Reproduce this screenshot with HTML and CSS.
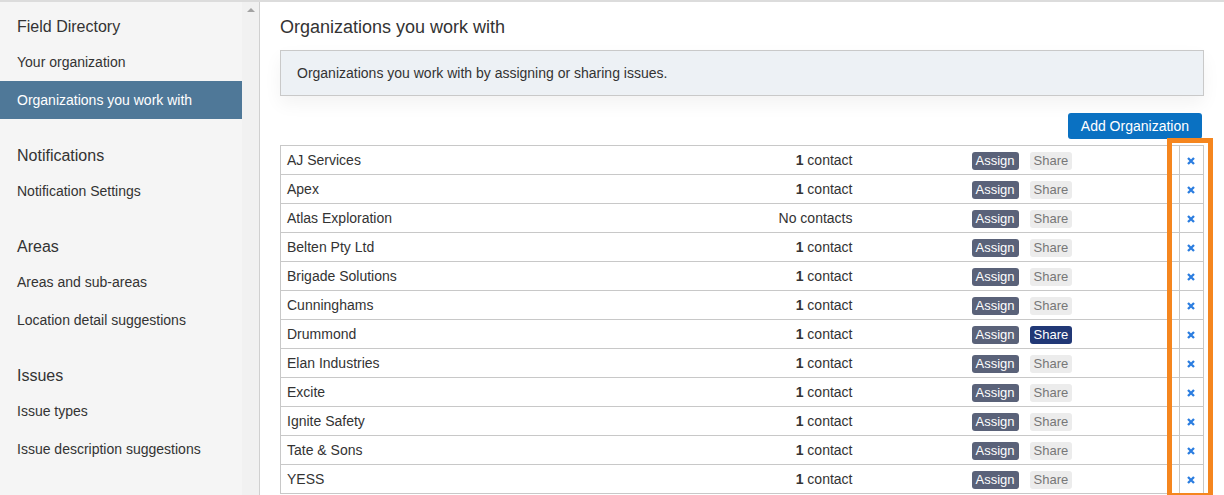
FILE: index.html
```html
<!DOCTYPE html>
<html lang="en">
<head>
<meta charset="utf-8">
<title>Organizations you work with</title>
<link rel="stylesheet" href="styles.css">
</head>
<body>
<div class="app">
  <aside class="sidebar">
    <section class="nav-section">
      <h3 class="nav-heading">Field Directory</h3>
      <a class="nav-link" href="#">Your organization</a>
      <a class="nav-link active" href="#">Organizations you work with</a>
    </section>
    <section class="nav-section">
      <h3 class="nav-heading">Notifications</h3>
      <a class="nav-link" href="#">Notification Settings</a>
    </section>
    <section class="nav-section">
      <h3 class="nav-heading">Areas</h3>
      <a class="nav-link" href="#">Areas and sub-areas</a>
      <a class="nav-link" href="#">Location detail suggestions</a>
    </section>
    <section class="nav-section">
      <h3 class="nav-heading">Issues</h3>
      <a class="nav-link" href="#">Issue types</a>
      <a class="nav-link" href="#">Issue description suggestions</a>
    </section>
  </aside>
  <div class="scrollbar"><span class="scroll-arrow"></span></div>
  <main class="main">
    <h1 class="page-title">Organizations you work with</h1>
    <div class="info-box">Organizations you work with by assigning or sharing issues.</div>
    <div class="toolbar"><button class="btn-primary" type="button">Add Organization</button></div>
    <div class="table-wrap">
      <table class="org-table">
        <colgroup>
          <col class="c-name"><col class="c-contacts"><col class="c-actions"><col class="c-remove">
        </colgroup>
        <tbody>
          <tr><td>AJ Services</td><td class="contacts"><b>1</b> contact</td><td class="actions"><span class="badge assign">Assign</span><span class="badge share">Share</span></td><td class="remove"><svg viewBox="0 0 8 8" width="8" height="8"><path d="M1 1L7 7M7 1L1 7"/></svg></td></tr>
          <tr><td>Apex</td><td class="contacts"><b>1</b> contact</td><td class="actions"><span class="badge assign">Assign</span><span class="badge share">Share</span></td><td class="remove"><svg viewBox="0 0 8 8" width="8" height="8"><path d="M1 1L7 7M7 1L1 7"/></svg></td></tr>
          <tr><td>Atlas Exploration</td><td class="contacts">No contacts</td><td class="actions"><span class="badge assign">Assign</span><span class="badge share">Share</span></td><td class="remove"><svg viewBox="0 0 8 8" width="8" height="8"><path d="M1 1L7 7M7 1L1 7"/></svg></td></tr>
          <tr><td>Belten Pty Ltd</td><td class="contacts"><b>1</b> contact</td><td class="actions"><span class="badge assign">Assign</span><span class="badge share">Share</span></td><td class="remove"><svg viewBox="0 0 8 8" width="8" height="8"><path d="M1 1L7 7M7 1L1 7"/></svg></td></tr>
          <tr><td>Brigade Solutions</td><td class="contacts"><b>1</b> contact</td><td class="actions"><span class="badge assign">Assign</span><span class="badge share">Share</span></td><td class="remove"><svg viewBox="0 0 8 8" width="8" height="8"><path d="M1 1L7 7M7 1L1 7"/></svg></td></tr>
          <tr><td>Cunninghams</td><td class="contacts"><b>1</b> contact</td><td class="actions"><span class="badge assign">Assign</span><span class="badge share">Share</span></td><td class="remove"><svg viewBox="0 0 8 8" width="8" height="8"><path d="M1 1L7 7M7 1L1 7"/></svg></td></tr>
          <tr><td>Drummond</td><td class="contacts"><b>1</b> contact</td><td class="actions"><span class="badge assign">Assign</span><span class="badge share on">Share</span></td><td class="remove"><svg viewBox="0 0 8 8" width="8" height="8"><path d="M1 1L7 7M7 1L1 7"/></svg></td></tr>
          <tr><td>Elan Industries</td><td class="contacts"><b>1</b> contact</td><td class="actions"><span class="badge assign">Assign</span><span class="badge share">Share</span></td><td class="remove"><svg viewBox="0 0 8 8" width="8" height="8"><path d="M1 1L7 7M7 1L1 7"/></svg></td></tr>
          <tr><td>Excite</td><td class="contacts"><b>1</b> contact</td><td class="actions"><span class="badge assign">Assign</span><span class="badge share">Share</span></td><td class="remove"><svg viewBox="0 0 8 8" width="8" height="8"><path d="M1 1L7 7M7 1L1 7"/></svg></td></tr>
          <tr><td>Ignite Safety</td><td class="contacts"><b>1</b> contact</td><td class="actions"><span class="badge assign">Assign</span><span class="badge share">Share</span></td><td class="remove"><svg viewBox="0 0 8 8" width="8" height="8"><path d="M1 1L7 7M7 1L1 7"/></svg></td></tr>
          <tr><td>Tate &amp; Sons</td><td class="contacts"><b>1</b> contact</td><td class="actions"><span class="badge assign">Assign</span><span class="badge share">Share</span></td><td class="remove"><svg viewBox="0 0 8 8" width="8" height="8"><path d="M1 1L7 7M7 1L1 7"/></svg></td></tr>
          <tr><td>YESS</td><td class="contacts"><b>1</b> contact</td><td class="actions"><span class="badge assign">Assign</span><span class="badge share">Share</span></td><td class="remove"><svg viewBox="0 0 8 8" width="8" height="8"><path d="M1 1L7 7M7 1L1 7"/></svg></td></tr>
        </tbody>
      </table>
      <div class="highlight"></div>
    </div>
  </main>
</div>
</body>
</html>
```
FILE: styles.css
```css
* { box-sizing: border-box; }
html, body { margin: 0; padding: 0; }
body {
  font-family: "Liberation Sans", Arial, sans-serif;
  color: #333;
  background: #fff;
  height: 495px;
  overflow: hidden;
}
.app {
  display: flex;
  height: 495px;
  border-top: 2px solid #dcdcdc;
}
.sidebar {
  width: 242px;
  flex: none;
  background: #f5f5f5;
  padding-top: 14px;
}
.nav-section + .nav-section { margin-top: 26px; }
.nav-heading {
  margin: 0 0 5px;
  padding-left: 17px;
  font-size: 16px;
  font-weight: normal;
  line-height: 22px;
  color: #333;
}
.nav-link {
  display: block;
  height: 38px;
  line-height: 38px;
  padding-left: 17px;
  font-size: 14px;
  color: #333;
  text-decoration: none;
}
.nav-link.active {
  background: #4f7898;
  color: #fff;
}
.scrollbar {
  width: 18px;
  flex: none;
  background: #f1f1f1;
  border-right: 1px solid #d0d0d0;
  display: flex;
  justify-content: center;
  padding-top: 6px;
}
.scroll-arrow {
  width: 0;
  height: 0;
  border-left: 4px solid transparent;
  border-right: 4px solid transparent;
  border-bottom: 4px solid #a3a3a3;
}
.main {
  flex: 1;
  padding: 0 20px;
}
.page-title {
  margin: 14px 0 12px;
  font-size: 18px;
  font-weight: normal;
  line-height: 22px;
  color: #333;
}
.info-box {
  height: 46px;
  line-height: 44px;
  padding: 0 16px;
  background: #edf1f5;
  border: 1px solid #c9c9c9;
  font-size: 14px;
  box-shadow: 0 8px 18px rgba(0, 0, 0, 0.05);
}
.toolbar {
  display: flex;
  justify-content: flex-end;
  margin-top: 17px;
  padding-right: 2px;
}
.btn-primary {
  height: 26px;
  padding: 0 13px;
  border: 0;
  border-radius: 3px;
  background: #0a71c2;
  color: #fff;
  font-family: "Liberation Sans", Arial, sans-serif;
  font-size: 14px;
  line-height: 26px;
}
.table-wrap {
  position: relative;
  margin-top: 6px;
}
.org-table {
  width: 100%;
  border-collapse: collapse;
  table-layout: fixed;
  font-size: 14px;
}
.c-name { width: 492px; }
.c-contacts { width: 86px; }
.c-remove { width: 24px; }
.org-table tr { height: 29px; }
.org-table td {
  border-top: 1px solid #c8c8c8;
  border-bottom: 1px solid #c8c8c8;
  padding: 0 6px;
  white-space: nowrap;
  vertical-align: middle;
}
.org-table td:first-child { border-left: 1px solid #c8c8c8; }
.org-table td.contacts { text-align: right; }
.org-table td.actions { padding-left: 113px; }
.org-table td.remove {
  border-left: 1px solid #c8c8c8;
  border-right: 1px solid #c8c8c8;
  padding: 0 1px 0 0;
  text-align: center;
}
.remove svg {
  display: inline-block;
  vertical-align: middle;
  fill: none;
  stroke: #2b7de0;
  stroke-width: 2.3;
}
.badge {
  display: inline-block;
  height: 18px;
  line-height: 18px;
  padding: 0 4px;
  border-radius: 3px;
  font-size: 13px;
  vertical-align: middle;
  margin-top: 2px;
}
.badge + .badge { margin-left: 11px; }
.badge.assign { background: #5a6279; color: #fff; }
.badge.share { background: #ececec; color: #777; }
.badge.share.on { background: #213876; color: #fff; }
.highlight {
  position: absolute;
  left: 887px;
  top: -7px;
  width: 46px;
  height: 360px;
  border: 5px solid #f5861f;
  pointer-events: none;
}
```
